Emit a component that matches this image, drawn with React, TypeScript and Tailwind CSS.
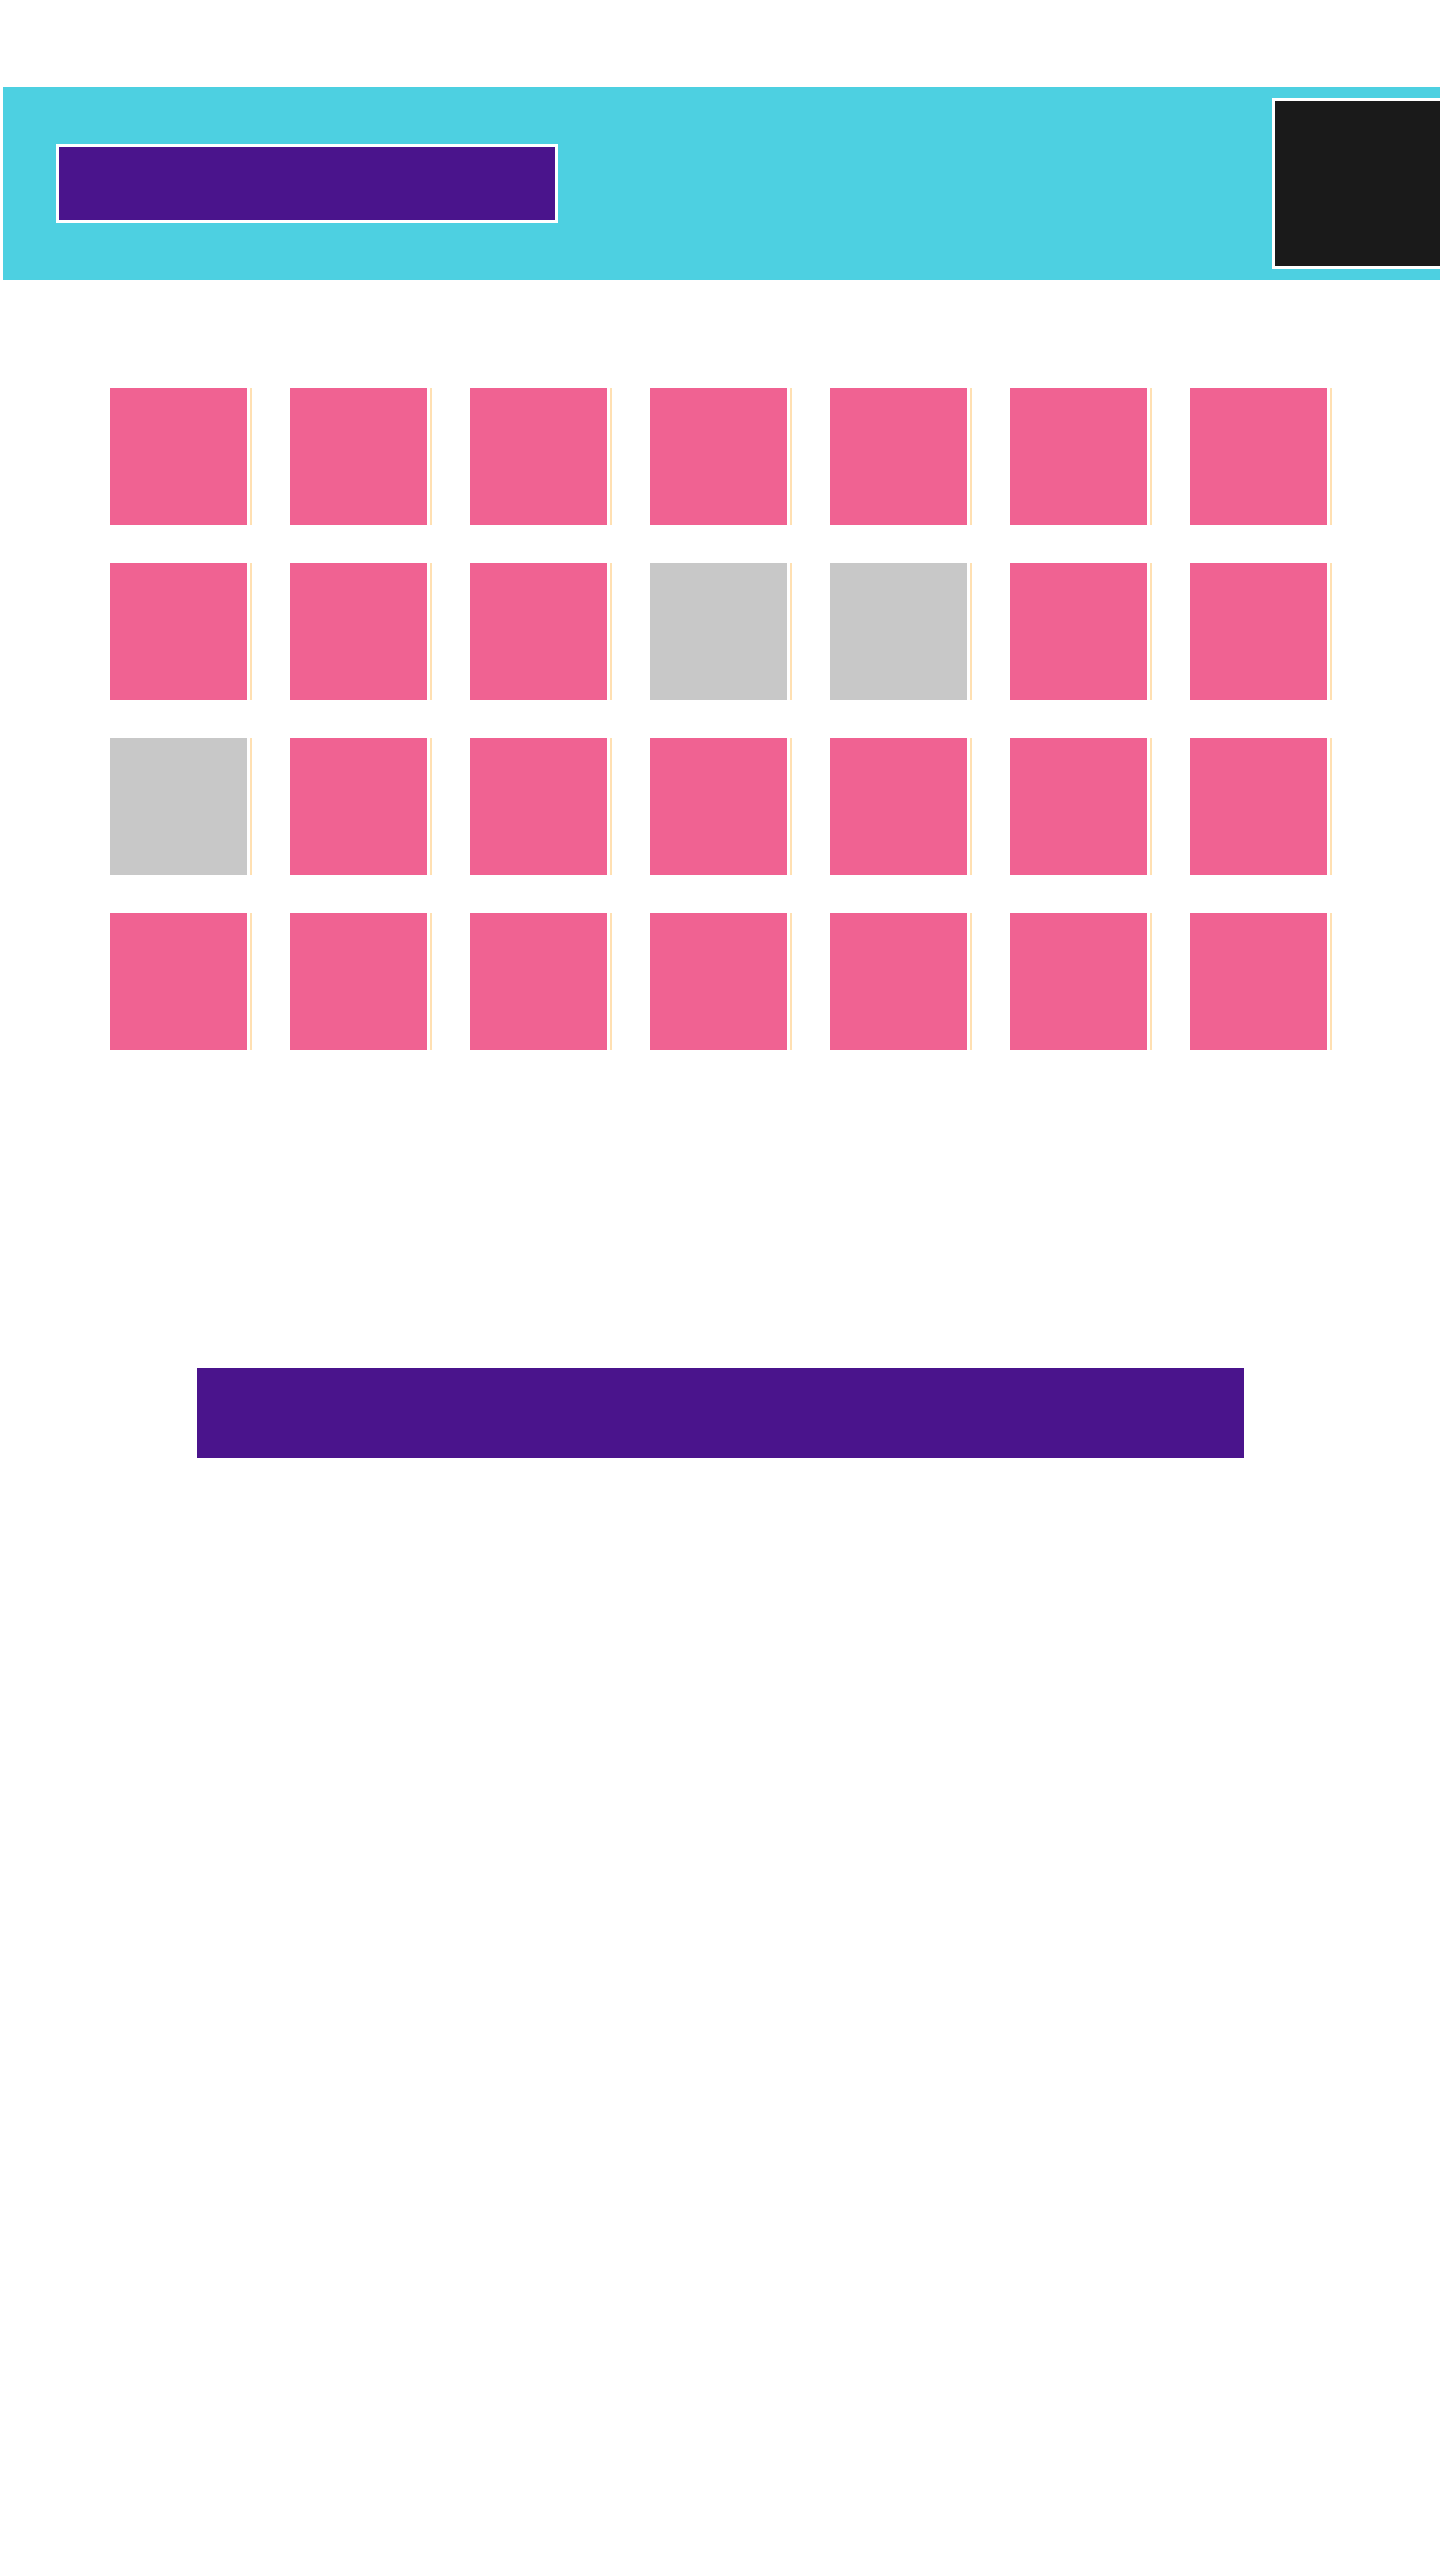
const GREY = new Set(['1-3', '1-4', '2-0']);

function Tile({ grey }: { grey: boolean }) {
  return (
    <div className="flex">
      <div className={`h-[137px] w-[137px] ${grey ? 'bg-[#C8C8C8]' : 'bg-[#F06292]'}`} />
      <div className="ml-[3px] h-[137px] w-[2px] bg-[#FFE0B2]" />
    </div>
  );
}

export default function App() {
  const rows = [0, 1, 2, 3];
  const cols = [0, 1, 2, 3, 4, 5, 6];
  return (
    <div className="min-h-[2560px] overflow-hidden bg-white pt-[87px]">
      <header className="ml-[3px] flex h-[193px] items-start overflow-hidden bg-[#4DD0E1]">
        <div className="ml-[53px] mt-[57px] h-[79px] w-[502px] shrink-0 border-[3px] border-white bg-[#4A148C]" />
        <div className="ml-[714px] mt-[11px] h-[171px] w-[171px] shrink-0 border-[3px] border-white bg-[#1A1A1A]" />
      </header>

      <section className="mt-[108px] flex flex-col gap-[38px] pl-[110px]">
        {rows.map((r) => (
          <div key={r} className="flex gap-[38px]">
            {cols.map((c) => (
              <Tile key={c} grey={GREY.has(`${r}-${c}`)} />
            ))}
          </div>
        ))}
      </section>

      <div className="ml-[197px] mt-[318px] h-[90px] w-[1047px] bg-[#4A148C]" />
    </div>
  );
}
